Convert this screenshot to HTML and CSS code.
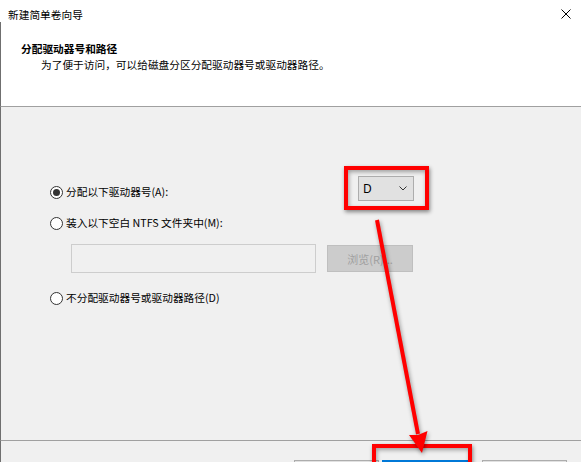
FILE: index.html
```html
<!DOCTYPE html>
<html lang="zh-CN">
<head>
  <meta charset="UTF-8">
  <title>新建简单卷向导</title>
  <link rel="stylesheet" href="styles.css">
</head>
<body>
  <div class="window">
    <!-- Title bar -->
    <div class="titlebar">
      <span class="title">新建简单卷向导</span>
      <svg class="close" width="10" height="10" viewBox="0 0 10 10">
        <path d="M0.5 0.5 L9.5 9.5 M9.5 0.5 L0.5 9.5" stroke="#000" stroke-width="1" fill="none"/>
      </svg>
    </div>

    <!-- Header -->
    <div class="header">
      <div class="heading">分配驱动器号和路径</div>
      <div class="subtitle">为了便于访问，可以给磁盘分区分配驱动器号或驱动器路径。</div>
    </div>

    <!-- Options -->
    <div class="content">
      <div class="row row-letter">
        <label class="radio-label"><span class="radio checked"></span>分配以下驱动器号(A):</label>
        <div class="dropdown">
          <span class="dd-value">D</span>
          <svg width="8" height="5" viewBox="0 0 8 5">
            <path d="M0.5 0.5 L4 4 L7.5 0.5" stroke="#333" stroke-width="1" fill="none"/>
          </svg>
        </div>
      </div>

      <div class="row row-mount">
        <label class="radio-label"><span class="radio"></span>装入以下空白 NTFS 文件夹中(M):</label>
      </div>

      <div class="path-row">
        <div class="path-box"></div>
        <button class="browse" disabled>浏览(R)...</button>
      </div>

      <div class="row row-none">
        <label class="radio-label"><span class="radio"></span>不分配驱动器号或驱动器路径(D)</label>
      </div>
    </div>

    <!-- Footer buttons (only their top edges are in view) -->
    <div class="footer">
      <button class="btn btn-back"></button>
      <button class="btn btn-next"></button>
      <button class="btn btn-cancel"></button>
    </div>

    <!-- Annotation overlays -->
    <div class="mark mark-drive"></div>
    <div class="mark mark-next"></div>
    <svg class="arrow" width="581" height="462" viewBox="0 0 581 462">
      <line x1="377" y1="220" x2="418" y2="434" stroke="#ff0000" stroke-width="4"/>
      <polygon points="422,453 427.5,431 418,435 409,435" fill="#ff0000"/>
    </svg>
  </div>
</body>
</html>
```

FILE: styles.css
```css
html, body {
  margin: 0;
  padding: 0;
}
body {
  font-family: "Noto Sans CJK SC", "Noto Sans", sans-serif;
  font-size: 10.7px;
  color: #000;
  background: #f0f0f0;
}
.window {
  position: relative;
  width: 581px;
  height: 462px;
  overflow: hidden;
  background: #f0f0f0;
}
.titlebar {
  box-sizing: border-box;
  height: 22px;
  padding: 7px 10px 0 8px;
  background: #fff;
  display: flex;
  justify-content: space-between;
  align-items: flex-start;
}
.title {
  line-height: 16px;
}
.close {
  margin-top: 2px;
}
.header {
  box-sizing: border-box;
  height: 85px;
  padding: 19px 0 0 20px;
  background: #fff;
  border-left: 1px solid #6f6f6f;
  border-bottom: 1px solid #a0a0a0;
}
.heading {
  font-weight: bold;
  line-height: 16px;
}
.subtitle {
  line-height: 16px;
  padding-left: 20px;
}
.content {
  box-sizing: border-box;
  height: 333px;
  padding: 69px 0 0 49px;
  border-left: 1px solid #6f6f6f;
}
.row {
  display: flex;
}
.row-letter {
  height: 25px;
}
.row-letter .radio-label {
  width: 308px;
  align-self: flex-end;
  margin-bottom: 1px;
}
.row-mount {
  margin-top: 14px;
}
.row-none {
  margin-top: 17px;
}
.radio-label {
  display: flex;
  align-items: center;
  gap: 3px;
  line-height: 16px;
}
.radio {
  box-sizing: border-box;
  width: 13px;
  height: 13px;
  border: 1px solid #333;
  border-radius: 50%;
  background: #fff;
  display: flex;
  align-items: center;
  justify-content: center;
}
.radio.checked::after {
  content: "";
  width: 7px;
  height: 7px;
  border-radius: 50%;
  background: #333;
}
.dropdown {
  box-sizing: border-box;
  width: 56px;
  height: 25px;
  border: 1px solid #adadad;
  background: #e1e1e1;
  display: flex;
  align-items: center;
  justify-content: space-between;
  padding: 0 6px 0 4px;
}
.dd-value {
  font-family: "Noto Sans", sans-serif;
  font-size: 12px;
}
.path-row {
  display: flex;
  align-items: center;
  gap: 11px;
  margin: 13px 0 0 21px;
}
.path-box {
  box-sizing: border-box;
  width: 245px;
  height: 29px;
  border: 1px solid #cdcdcd;
  background: #f0f0f0;
}
.browse {
  box-sizing: border-box;
  width: 86px;
  height: 27px;
  border: 1px solid #bfbfbf;
  background: #cccccc;
  color: #a0a0a0;
  font-family: inherit;
  font-size: 11px;
  padding: 0;
}
.footer {
  box-sizing: border-box;
  height: 22px;
  border-top: 1px solid #a0a0a0;
  border-left: 1px solid #6f6f6f;
  padding: 19px 14px 0 0;
  display: flex;
  justify-content: flex-end;
  align-items: flex-start;
}
.btn {
  box-sizing: border-box;
  height: 23px;
  border: 1px solid #adadad;
  background: #e1e1e1;
  padding: 0;
  flex: none;
}
.btn-back {
  width: 85px;
}
.btn-next {
  width: 86px;
  margin-left: 3px;
  border: 2px solid #0078d7;
}
.btn-cancel {
  width: 85px;
  margin-left: 14px;
}
.mark {
  position: absolute;
  box-sizing: border-box;
  border: 4px solid #ff0000;
  box-shadow: 1px 2px 4px rgba(0, 0, 0, 0.45), inset 1px 2px 4px rgba(0, 0, 0, 0.35);
}
.mark-drive {
  left: 344px;
  top: 166px;
  width: 85px;
  height: 44px;
}
.mark-next {
  left: 372px;
  top: 444px;
  width: 100px;
  height: 40px;
}
.arrow {
  position: absolute;
  left: 0;
  top: 0;
  pointer-events: none;
  filter: drop-shadow(1px 2px 2px rgba(0, 0, 0, 0.4));
}
```
